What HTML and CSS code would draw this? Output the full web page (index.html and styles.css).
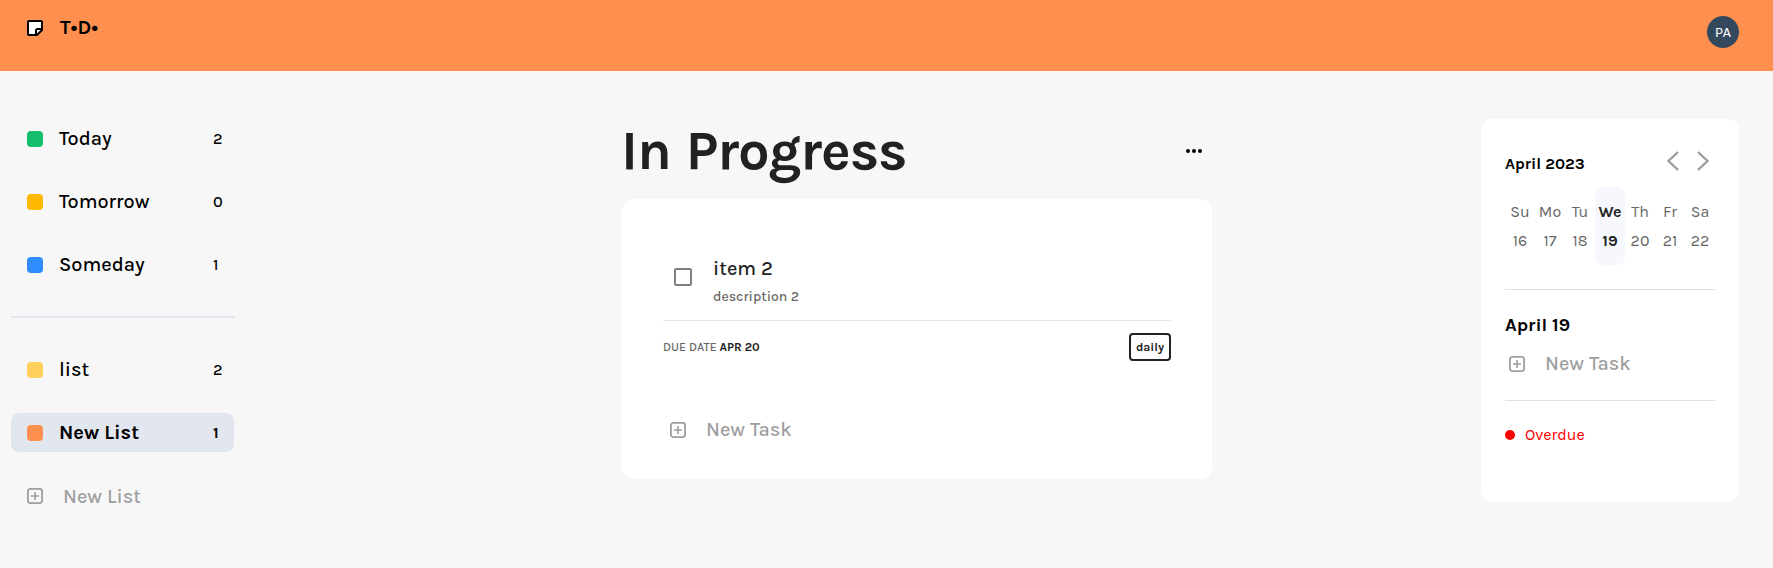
FILE: index.html
```html
<!DOCTYPE html>
<html lang="en">
<head>
<meta charset="utf-8">
<title>T•D•</title>
<link rel="stylesheet" href="styles.css">
</head>
<body>
<svg class="defs" width="0" height="0">
  <symbol id="plus-box" viewBox="0 0 16 16"><rect x=".9" y=".9" width="14.2" height="14.2" rx="2.5" fill="none" stroke="currentColor" stroke-width="1.800"/><path d="M8 4v8M4 8h8" stroke="currentColor" stroke-width="1.6"/></symbol>
</svg>
<header class="topbar">
  <div class="brand">
    <svg class="logo" viewBox="0 0 16 16"><path d="M2 1h12a1 1 0 0 1 1 1v8l-5 5H2a1 1 0 0 1-1-1V2a1 1 0 0 1 1-1z" fill="#fff" stroke="#000" stroke-width="2"/><path d="M9 15V10.500q0-1.500 1.500-1.500H15" fill="none" stroke="#000" stroke-width="2"/></svg>
    <span class="brand-name">T•D•</span>
  </div>
  <div class="avatar">PA</div>
</header>
<div class="layout">
  <nav class="sidebar">
    <a class="row"><i class="swatch green"></i><span class="name">Today</span><span class="count">2</span></a>
    <a class="row"><i class="swatch amber"></i><span class="name">Tomorrow</span><span class="count">0</span></a>
    <a class="row"><i class="swatch blue"></i><span class="name">Someday</span><span class="count">1</span></a>
    <hr class="divider">
    <a class="row"><i class="swatch yellow"></i><span class="name">list</span><span class="count">2</span></a>
    <a class="row selected"><i class="swatch orange"></i><span class="name">New List</span><span class="count">1</span></a>
    <a class="row add new-list"><svg class="icon"><use href="#plus-box"/></svg><span class="add-label">New List</span></a>
  </nav>
  <main class="main">
    <div class="heading">
      <h1 class="title">In Progress</h1>
      <svg class="more" viewBox="0 0 16 4"><circle cx="2" cy="2" r="2"/><circle cx="8" cy="2" r="2"/><circle cx="14" cy="2" r="2"/></svg>
    </div>
    <section class="card">
      <div class="task">
        <span class="checkbox"></span>
        <div>
          <div class="task-name">item 2</div>
          <div class="task-desc">description 2</div>
        </div>
      </div>
      <div class="meta">
        <div class="due">DUE DATE <b class="due-date">APR 20</b></div>
        <span class="tag">daily</span>
      </div>
      <div class="add new-task"><svg class="icon"><use href="#plus-box"/></svg><span class="add-label">New Task</span></div>
    </section>
  </main>
  <aside class="panel">
    <div class="month">
      <span class="month-name">April 2023</span>
      <svg class="arrows" viewBox="0 0 42 20"><path d="M11 1L1.500 10L11 19M31 1l9.500 9L31 19" fill="none" stroke="#9e9e9e" stroke-width="2.400"/></svg>
    </div>
    <div class="week">
      <div class="day"><span>Su</span><span>16</span></div>
      <div class="day"><span>Mo</span><span>17</span></div>
      <div class="day"><span>Tu</span><span>18</span></div>
      <div class="day now"><span>We</span><span>19</span></div>
      <div class="day"><span>Th</span><span>20</span></div>
      <div class="day"><span>Fr</span><span>21</span></div>
      <div class="day"><span>Sa</span><span>22</span></div>
    </div>
    <div class="agenda">
      <div class="date">April 19</div>
      <div class="add panel-add"><svg class="icon"><use href="#plus-box"/></svg><span class="add-label">New Task</span></div>
    </div>
    <div class="overdue"><i class="dot"></i><span>Overdue</span></div>
  </aside>
</div>
</body>
</html>
```
FILE: styles.css
```css
* { box-sizing: border-box; }
body { margin: 0; background: #f7f7f7; color: #000; font-family: Karla, Roboto, sans-serif; }
.defs { display: block; }
.topbar { display: flex; justify-content: space-between; align-items: flex-start; height: 71px; padding: 16px 34px 0 27px; background: #ff8f4f; }
.brand { display: flex; padding-top: 4px; }
.logo { width: 16px; height: 16px; }
.brand-name { margin: -2px 0 0 17px; font-size: 20px; line-height: 19px; font-weight: 700; letter-spacing: .2px; }
.avatar { width: 32px; height: 32px; border-radius: 50%; background: #34495e; color: #fff; font-size: 15px; line-height: 32px; text-align: center; }
.layout { display: flex; align-items: flex-start; padding: 48px 34px 0 11px; }
.sidebar { display: flex; flex-direction: column; gap: 24px; width: 224px; }
.row { display: flex; align-items: flex-start; width: 223px; height: 39px; padding: 12px 11px 0 16px; border-radius: 8px; }
.selected { background: #e1e6ef; }
.swatch { width: 16px; height: 16px; border-radius: 4px; }
.green { background: #14be6e; }
.amber { background: #ffb800; }
.blue { background: #2f8cff; }
.yellow { background: #ffd15c; }
.orange { background: #ff8f4f; }
.name { flex: 1; margin-left: 16px; font-size: 20px; line-height: 15px; font-weight: 500; }
.count { width: 10px; font-size: 16px; line-height: 15px; font-weight: 500; }
.selected .name, .selected .count { font-weight: 700; }
.divider { width: 224px; height: 2px; margin: 8px 0; border: 0; background: #e1e6ef; }
.add { color: #9e9e9e; }
.icon { width: 16px; height: 16px; }
.add-label { margin-left: 20px; font-size: 20px; line-height: 15px; font-weight: 500; }
.new-list .add-label { margin-top: 1px; }
.main { width: 590px; margin-left: 387px; }
.heading { display: flex; align-items: flex-start; justify-content: space-between; height: 80px; padding: 3px 10px 0 0; }
.title { margin: 0 0 0 -1px; color: #212121; font-size: 56px; line-height: 57px; font-weight: 700; letter-spacing: -1.100px; word-spacing: 2px; }
.more { width: 16px; height: 4px; margin-top: 27px; }
.card { height: 280px; padding: 60px 41px 0; border-radius: 12px; background: #fff; }
.task { display: flex; height: 62px; border-bottom: 1px solid #e1e6ef; }
.checkbox { width: 18px; height: 18px; margin: 9px 21px 0 11px; border: 2px solid #808080; border-radius: 2px; }
.task-name { color: #212121; font-size: 20px; line-height: 19px; font-weight: 500; }
.task-desc { margin-top: 10px; color: #666; font-size: 14px; line-height: 17px; font-weight: 500; }
.meta { display: flex; justify-content: space-between; height: 41px; padding-top: 12px; }
.due { color: #666; font-size: 12px; line-height: 28px; font-weight: 500; }
.due-date { color: #212121; font-weight: 700; }
.tag { width: 42px; height: 28px; border: 2px solid #212121; border-radius: 4px; color: #212121; background: #fdfdfd; font-size: 12px; line-height: 24px; font-weight: 700; text-align: center; }
.new-task { display: flex; padding: 60px 0 0 7px; }
.panel { width: 258px; height: 383px; margin-left: auto; padding: 32px 24px 0; border-radius: 11px; background: #fff; }
.month { display: flex; justify-content: space-between; height: 36px; padding-right: 6px; }
.month-name { margin-top: 3px; font-size: 16px; line-height: 19px; font-weight: 700; }
.arrows { width: 42px; height: 20px; }
.week { display: flex; height: 103px; border-bottom: 1px solid #e0e0e0; }
.day { display: flex; flex-direction: column; gap: 10px; width: 30px; height: 78px; padding-top: 15px; border-radius: 8px; color: #666; font-size: 16px; line-height: 19px; text-align: center; }
.now { color: #212121; background: #f7f8fd; font-weight: 700; }
.agenda { height: 111px; padding-top: 24px; border-bottom: 1px solid #e0e0e0; }
.date { font-size: 18.720px; line-height: 22px; font-weight: 700; }
.panel-add { display: flex; padding: 20px 0 0 4px; }
.overdue { display: flex; align-items: flex-start; gap: 10px; padding-top: 24px; color: #f00; font-size: 16px; line-height: 19px; }
.dot { width: 10px; height: 10px; margin-top: 5px; border-radius: 50%; background: #f00; }
```
